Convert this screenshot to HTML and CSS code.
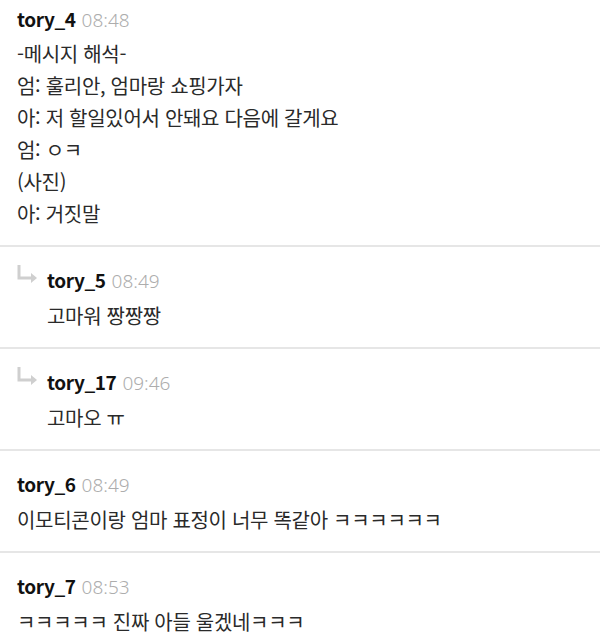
FILE: index.html
```html
<!DOCTYPE html>
<html lang="ko">
<head>
    <meta charset="UTF-8">
    <meta name="viewport" content="width=device-width, initial-scale=1.0">
    <title>댓글</title>
    <link rel="stylesheet" href="styles.css">
</head>
<body>
    <div class="comments">
        <div class="comment first">
            <div class="head"><span class="name">tory_4</span><span class="time">08:48</span></div>
            <div class="text">-메시지 해석-<br>엄: 훌리안, 엄마랑 쇼핑가자<br>아: 저 할일있어서 안돼요 다음에 갈게요<br>엄: ㅇㅋ<br>(사진)<br>아: 거짓말</div>
        </div>

        <div class="comment reply">
            <svg class="arrow" width="22" height="20" viewBox="0 0 22 20">
                <path d="M2 1 V14 H15" fill="none" stroke="#cfcfcf" stroke-width="3"/>
                <path d="M14 9 L20 14 L14 19 Z" fill="#cfcfcf"/>
            </svg>
            <div class="body">
                <div class="head"><span class="name">tory_5</span><span class="time">08:49</span></div>
                <div class="text">고마워 짱짱짱</div>
            </div>
        </div>

        <div class="comment reply">
            <svg class="arrow" width="22" height="20" viewBox="0 0 22 20">
                <path d="M2 1 V14 H15" fill="none" stroke="#cfcfcf" stroke-width="3"/>
                <path d="M14 9 L20 14 L14 19 Z" fill="#cfcfcf"/>
            </svg>
            <div class="body">
                <div class="head"><span class="name">tory_17</span><span class="time">09:46</span></div>
                <div class="text">고마오 ㅠ</div>
            </div>
        </div>

        <div class="comment">
            <div class="head"><span class="name">tory_6</span><span class="time">08:49</span></div>
            <div class="text">이모티콘이랑 엄마 표정이 너무 똑같아 ㅋㅋㅋㅋㅋㅋ</div>
        </div>

        <div class="comment last">
            <div class="head"><span class="name">tory_7</span><span class="time">08:53</span></div>
            <div class="text">ㅋㅋㅋㅋㅋ 진짜 아들 울겠네ㅋㅋㅋ</div>
        </div>
    </div>
</body>
</html>
```

FILE: styles.css
```css
body {
    margin: 0;
    background: #fff;
    font-family: "Noto Sans CJK KR", "Noto Sans", sans-serif;
    color: #2a2a2a;
}
.comments {
    width: 600px;
}
.comment {
    padding: 15px 17px 15px;
    border-bottom: 2px solid #e6e6e6;
}
.comment.first {
    padding-top: 0;
}
.comment.last {
    border-bottom: none;
}
.reply {
    display: flex;
}
.arrow {
    flex: none;
    margin-top: 2px;
    margin-right: 8px;
}
.head {
    height: 36px;
    line-height: 36px;
}
.first .head {
    height: 38px;
    line-height: 38px;
}
.name {
    font-size: 19px;
    font-weight: 700;
    color: #111;
    letter-spacing: -0.4px;
}
.time {
    margin-left: 6px;
    font-family: "Noto Sans", sans-serif;
    font-size: 19px;
    font-weight: 300;
    color: #adadad;
}
.text {
    font-size: 20px;
    line-height: 32px;
    letter-spacing: -0.3px;
}
.reply .text,
.comment:not(.first):not(.reply) .text {
    margin-top: 2px;
}
```
